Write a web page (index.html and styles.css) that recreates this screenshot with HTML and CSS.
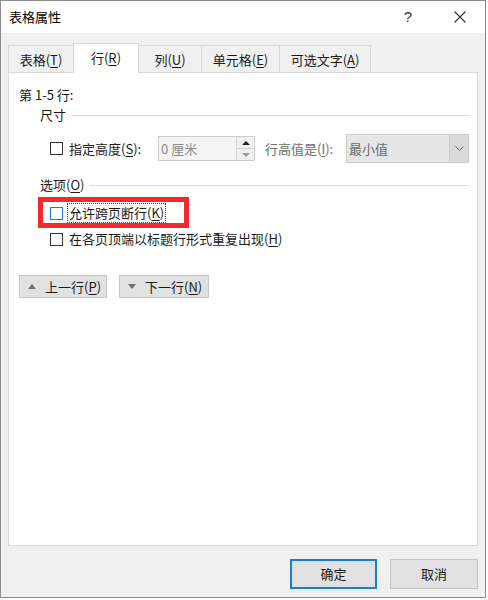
FILE: index.html
```html
<!DOCTYPE html>
<html lang="zh-CN">
<head>
<meta charset="utf-8">
<title>表格属性</title>
<link rel="stylesheet" href="styles.css">
</head>
<body>
<div class="window">
  <div class="titlebar">
    <span class="title">表格属性</span>
    <span class="help">?</span>
    <span class="close">
      <svg width="12" height="12" viewBox="0 0 12 12"><path d="M0.5 0.5 L11.5 11.5 M11.5 0.5 L0.5 11.5" stroke="#333" stroke-width="1.1" fill="none"/></svg>
    </span>
  </div>
  <div class="body">
    <div class="tabs">
      <div class="tab tab-table">表格(<u>T</u>)</div>
      <div class="tab tab-row active">行(<u>R</u>)</div>
      <div class="tab tab-col">列(<u>U</u>)</div>
      <div class="tab tab-cell">单元格(<u>E</u>)</div>
      <div class="tab tab-alt">可选文字(<u>A</u>)</div>
    </div>
    <div class="panel">
      <div class="range">第 1-5 行:</div>
      <div class="group-head"><span>尺寸</span><div class="rule"></div></div>
      <div class="size-row">
        <span class="chk"></span>
        <span class="size-label">指定高度(<u>S</u>):</span>
        <div class="spin">
          <span class="spin-val">0 厘米</span>
          <div class="spin-btns">
            <span class="spin-up"><span class="tri-up dark"></span></span>
            <span class="spin-down"><span class="tri-down light"></span></span>
          </div>
        </div>
        <span class="rule-label">行高值是(<u>I</u>):</span>
        <div class="select">
          <span class="select-val">最小值</span>
          <span class="select-btn">
            <svg width="9" height="5" viewBox="0 0 9 5"><path d="M0.5 0.5 L4.5 4.5 L8.5 0.5" stroke="#666" stroke-width="1" fill="none"/></svg>
          </span>
        </div>
      </div>
      <div class="group-head options-head"><span>选项(<u>O</u>)</span><div class="rule"></div></div>
      <div class="opt-row first">
        <span class="chk focus"></span>
        <span class="opt-label focused">允许跨页断行(<u>K</u>)</span>
        <div class="highlight"></div>
      </div>
      <div class="opt-row">
        <span class="chk"></span>
        <span class="opt-label">在各页顶端以标题行形式重复出现(<u>H</u>)</span>
      </div>
      <div class="nav-row">
        <div class="nav-btn prev"><span class="tri-up mid"></span><span class="nav-text">上一行(<u>P</u>)</span></div>
        <div class="nav-btn next"><span class="tri-down mid"></span><span class="nav-text">下一行(<u>N</u>)</span></div>
      </div>
    </div>
    <div class="footer">
      <div class="btn default">确定</div>
      <div class="btn cancel">取消</div>
    </div>
  </div>
</div>
</body>
</html>
```
FILE: styles.css
```css
* { box-sizing: border-box; }
html, body { margin: 0; padding: 0; background: #ffffff; }
body {
  font-family: "Noto Sans CJK SC", "Microsoft YaHei", sans-serif;
  font-size: 13px;
  color: #1a1a1a;
}
u { text-decoration: underline; text-underline-offset: 2px; }

.window {
  width: 486px;
  height: 598px;
  border: 1px solid #8c8c8c;
  display: flex;
  flex-direction: column;
  background: #f0f0f0;
}

.titlebar {
  height: 32px;
  background: #ffffff;
  display: flex;
  align-items: center;
  padding: 0 3px 0 8px;
  flex: none;
}
.title { flex: 1; font-size: 13px; line-height: 18px; color: #000; }
.help {
  width: 44px;
  text-align: center;
  font-family: "Liberation Sans", sans-serif;
  font-size: 15px;
  color: #333;
  line-height: 18px;
}
.close {
  width: 44px;
  margin-left: 8px;
  display: flex;
  justify-content: center;
  align-items: center;
}

.body {
  flex: 1;
  display: flex;
  flex-direction: column;
  padding: 10px 7px 0 7px;
}

.tabs {
  display: flex;
  align-items: flex-start;
  height: 30px;
  margin-bottom: -1px;
  position: relative;
  z-index: 1;
}
.tab {
  height: 27px;
  margin-top: 2px;
  border: 1px solid #d9d9d9;
  border-bottom: none;
  background: #f0f0f0;
  display: flex;
  align-items: center;
  justify-content: center;
  line-height: 18px;
  padding-top: 1px;
  color: #1a1a1a;
}
.tab + .tab { margin-left: -1px; }
.tab.active {
  height: 30px;
  margin-top: 0;
  background: #ffffff;
  padding-top: 0;
  padding-bottom: 2px;
  position: relative;
  z-index: 2;
}
.tab-table { width: 66px; }
.tab-row { width: 66px; }
.tab-col { width: 64px; }
.tab-cell { width: 79px; }
.tab-alt { width: 92px; }

.panel {
  height: 474px;
  flex: none;
  background: #ffffff;
  border: 1px solid #d9d9d9;
  padding: 13px 7px 0 10px;
  display: flex;
  flex-direction: column;
}

.range { line-height: 18px; }

.group-head {
  display: flex;
  align-items: center;
  line-height: 18px;
  margin-top: 2px;
  padding-left: 21px;
}
.group-head .rule {
  flex: 1;
  height: 1px;
  background: #dcdcdc;
  margin-left: 5px;
}
.options-head { margin-top: 13px; }

.size-row {
  display: flex;
  align-items: center;
  height: 29px;
  margin-top: 10px;
  padding-left: 31px;
}
.chk {
  width: 13px;
  height: 13px;
  border: 1px solid #333333;
  background: #ffffff;
  flex: none;
}
.chk.focus { border-color: #1c79d6; }
.size-label { margin-left: 6px; width: 89px; line-height: 18px; }

.spin {
  width: 97px;
  height: 25px;
  border: 1px solid #cccccc;
  background: #f4f4f4;
  display: flex;
  align-items: center;
}
.spin-val {
  flex: 1;
  padding-left: 2px;
  color: #8c8c8c;
  line-height: 18px;
}
.spin-btns {
  width: 18px;
  height: 23px;
  display: flex;
  flex-direction: column;
  border-left: 1px solid #d4d4d4;
}
.spin-up, .spin-down {
  flex: 1;
  display: flex;
  align-items: center;
  justify-content: center;
  background: #f0f0f0;
}
.spin-up { border-bottom: 1px solid #d4d4d4; }

.tri-up, .tri-down {
  width: 0;
  height: 0;
  border-left: 4px solid transparent;
  border-right: 4px solid transparent;
}
.tri-up { border-bottom: 4px solid #333; }
.tri-down { border-top: 4px solid #333; }
.tri-up.dark { border-bottom-color: #222; }
.tri-down.light { border-top-color: #9a9a9a; }
.tri-up.mid { border-bottom-color: #707070; border-left-width: 4px; border-right-width: 4px; border-bottom-width: 5px; }
.tri-down.mid { border-top-color: #707070; border-left-width: 4px; border-right-width: 4px; border-top-width: 5px; }

.rule-label {
  margin-left: 10px;
  width: 81px;
  color: #6d6d6d;
  line-height: 18px;
}
.select {
  width: 123px;
  height: 29px;
  border: 1px solid #cccccc;
  background: #e6e6e6;
  display: flex;
  align-items: stretch;
}
.select-val {
  flex: 1;
  display: flex;
  align-items: center;
  padding-left: 2px;
  color: #6d6d6d;
}
.select-btn {
  width: 19px;
  background: #dadada;
  border-left: 1px solid #cccccc;
  display: flex;
  align-items: center;
  justify-content: center;
}

.opt-row {
  display: flex;
  align-items: center;
  height: 26px;
  padding-left: 31px;
  position: relative;
}
.opt-row.first { margin-top: 6px; }
.opt-label { margin-left: 6px; line-height: 18px; }
.opt-label.focused {
  margin-left: 5px;
  padding: 0 1px;
  outline: 1px dotted #444;
  outline-offset: 0;
}
.highlight {
  position: absolute;
  left: 19px;
  top: -3px;
  width: 151px;
  height: 31px;
  border: 5px solid #ef2b30;
  pointer-events: none;
}

.nav-row {
  display: flex;
  gap: 12px;
  margin-top: 23px;
}
.nav-btn {
  height: 23px;
  background: #e1e1e1;
  border: 1px solid #c6c6c6;
  display: flex;
  align-items: center;
  padding-left: 8px;
}
.nav-btn.prev { width: 88px; }
.nav-btn.next { width: 90px; }
.nav-text { margin-left: 9px; line-height: 18px; }

.footer {
  display: flex;
  justify-content: flex-end;
  gap: 13px;
  margin-top: 13px;
}
.btn {
  height: 30px;
  background: #e1e1e1;
  border: 1px solid #c6c6c6;
  display: flex;
  align-items: center;
  justify-content: center;
  line-height: 18px;
}
.btn.default { width: 87px; border: 2px solid #1a7cd9; }
.btn.cancel { width: 88px; }
```
